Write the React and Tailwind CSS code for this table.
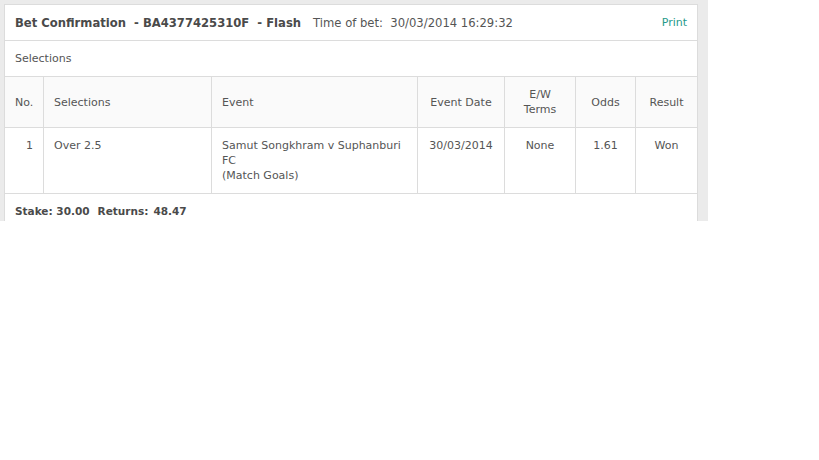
import React from "react";

const cols = [
  { key: "no", label: "No.", w: "w-[39px]", head: "text-left", cell: "text-right pr-[10px]" },
  { key: "sel", label: "Selections", w: "w-[168px]", head: "text-left", cell: "text-left" },
  { key: "event", label: "Event", w: "w-[206px]", head: "text-left", cell: "text-left" },
  { key: "date", label: "Event Date", w: "w-[87px]", head: "text-center", cell: "text-center" },
  { key: "ew", label: "E/W\nTerms", w: "w-[71px]", head: "text-center", cell: "text-center" },
  { key: "odds", label: "Odds", w: "w-[60px]", head: "text-center", cell: "text-center" },
  { key: "result", label: "Result", w: "w-[61px]", head: "text-center", cell: "text-center" },
];

const row = {
  no: "1",
  sel: "Over 2.5",
  event: "Samut Songkhram v Suphanburi FC\n(Match Goals)",
  date: "30/03/2014",
  ew: "None",
  odds: "1.61",
  result: "Won",
};

const App = () => {
  return (
    <div className="w-[708px] h-[221px] overflow-hidden bg-[#ebebeb] pl-[4px] pt-[4px] pr-[10px] font-['DejaVu_Sans',Verdana,sans-serif] text-[11px] text-[#555]">
      <div className="bg-white border border-[#dcdcdc] border-b-0 h-full">
        <div className="flex items-center justify-between h-[36px] px-[10px] pt-[2px] border-b border-[#dcdcdc]">
          <div className="flex items-center whitespace-pre text-[11.6px]">
            <span className="font-bold text-[#4a4a4a]">Bet Confirmation  - BA4377425310F  - Flash</span>
            <span className="ml-[12px]">Time of bet:  30/03/2014 16:29:32</span>
          </div>
          <a className="text-[11px] text-[#1f9a8a]">Print</a>
        </div>

        <div className="flex items-center h-[36px] px-[10px] pt-[1px] border-b border-[#dcdcdc]">
          Selections
        </div>

        <div className="flex h-[51px] border-b border-[#dcdcdc] bg-[#fafafa]">
          {cols.map((c, i) => (
            <div
              key={c.key}
              className={`${c.w} shrink-0 ${c.head} flex flex-col justify-center px-[10px] leading-[15px] whitespace-pre-line ${
                i < cols.length - 1 ? "border-r border-[#dcdcdc]" : ""
              }`}
            >
              {c.label}
            </div>
          ))}
        </div>

        <div className="flex h-[66px] border-b border-[#dcdcdc]">
          {cols.map((c, i) => (
            <div
              key={c.key}
              className={`${c.w} shrink-0 ${c.cell} pl-[10px] pr-[10px] pt-[10px] leading-[15px] whitespace-pre-line ${
                i < cols.length - 1 ? "border-r border-[#dcdcdc]" : ""
              }`}
            >
              {row[c.key]}
            </div>
          ))}
        </div>

        <div className="flex px-[10px] pt-[10px] font-bold text-[10.5px] text-[#4a4a4a]">
          <span>Stake: 30.00</span>
          <span className="ml-[8px]">Returns:</span>
          <span className="ml-[5px]">48.47</span>
        </div>
      </div>
    </div>
  );
};

export default App;
